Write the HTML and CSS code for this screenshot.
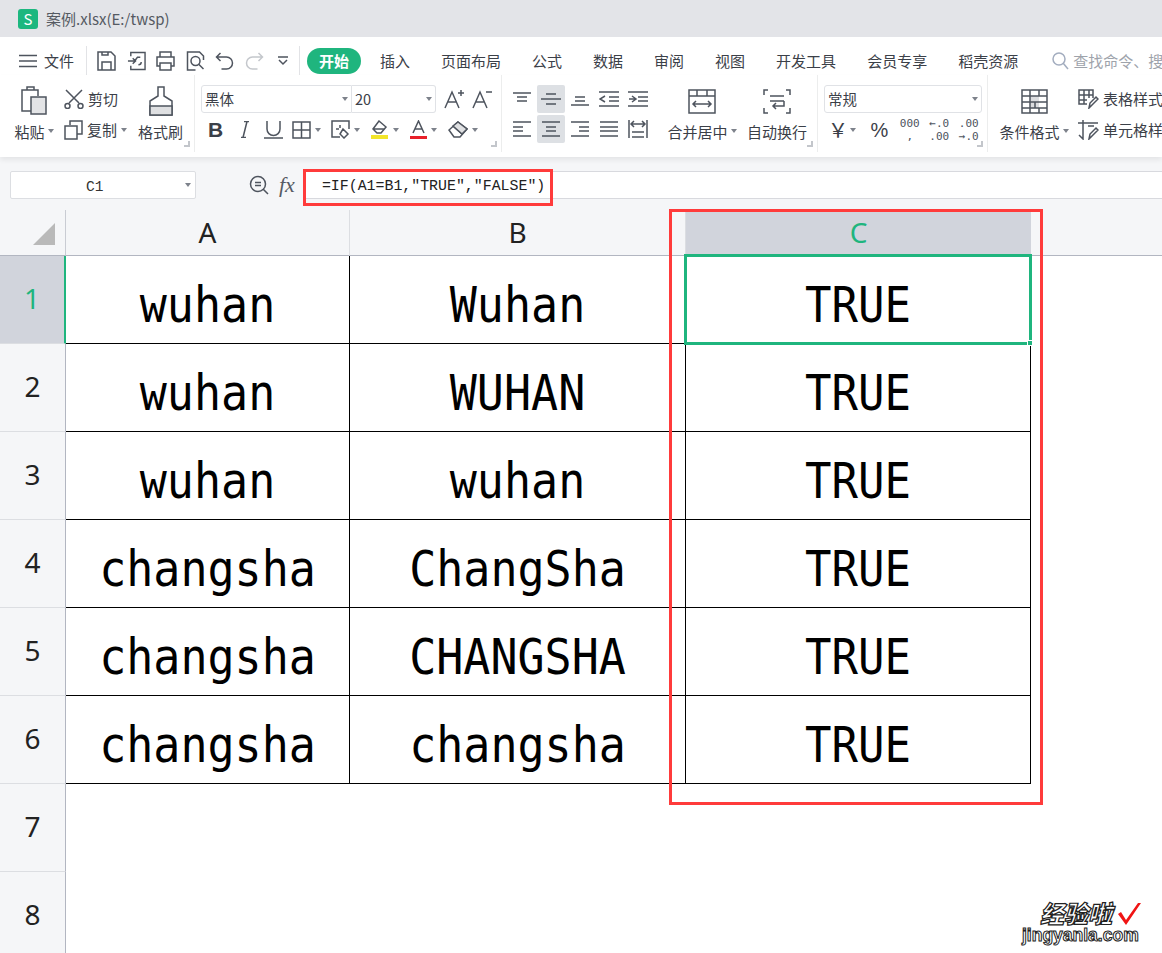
FILE: index.html
```html
<!DOCTYPE html>
<html lang="zh-CN">
<head>
    <meta charset="UTF-8">
    <title>案例.xlsx</title>
    <link rel="stylesheet" href="styles.css">
</head>
<body>
<div class="page">
    <div class="titlebar">
        <div class="logo">S</div>
        <span>案例.xlsx(E:/twsp)</span>
    </div>

    <div class="menubar">
        <svg class="ico burger" width="18" height="14" viewBox="0 0 18 14"><path d="M0 1.500h18M0 7h18M0 12.500h18"/></svg>
        <span class="file">文件</span>
        <i class="vsep first"></i>
        <svg class="ico qa" width="19" height="20" viewBox="0 0 19 20"><path d="M1 1h13l4 4v14H1zM5 19v-8h9v8M5 1v3h6V1"/></svg>
        <svg class="ico qa" width="19" height="20" viewBox="0 0 20 20"><path d="M4 5V1h15v18H4v-4M1 10h7l3-4h3M6 7l3 3-3 3M12 14a3 3 0 0 0 3-3"/></svg>
        <svg class="ico qa" width="19" height="20" viewBox="0 0 19 20"><path d="M4 6V1h11v5M4 15H1V6h17v9h-3M4 12h11v7H4z"/></svg>
        <svg class="ico qa" width="19" height="20" viewBox="0 0 18 20"><path d="M17 9V5l-4-4H1v18h8"/><circle cx="9" cy="10" r="4.500"/><path d="M12 13l5 5"/></svg>
        <svg class="ico qa" width="19" height="18" viewBox="0 0 18 18"><path d="M5 1L1 5l4 4M1 5h10a6 6 0 0 1 0 12H6"/></svg>
        <svg class="ico qa light" width="19" height="18" viewBox="0 0 18 18"><path d="M13 1l4 4-4 4M17 5H7a6 6 0 0 0 0 12h5"/></svg>
        <svg class="ico more" width="10" height="10" viewBox="0 0 10 10"><path d="M0 1h10M1 4l4 4 4-4"/></svg>
        <i class="vsep"></i>
        <span class="pill">开始</span>
        <nav class="tabs">
            <span>插入</span><span>页面布局</span><span>公式</span><span>数据</span><span>审阅</span><span>视图</span><span>开发工具</span><span>会员专享</span><span>稻壳资源</span>
        </nav>
        <div class="search">
            <svg class="ico" width="17" height="18" viewBox="0 0 17 18"><circle cx="7" cy="7" r="6"/><path d="M11 11l5 6"/></svg>
            <span>查找命令、搜</span>
        </div>
    </div>

    <div class="ribbon">
        <section class="group g-clip">
            <div class="big paste">
                <div class="big-icon">
                    <svg class="ico" width="28" height="30" viewBox="0 0 28 30"><path d="M12 25H2V4h16v6M7 4V1h7v3z"/><rect x="11" y="11" width="15" height="17" fill="#e3e4e6"/></svg>
                </div>
                <div class="label">粘贴<b class="caret"></b></div>
            </div>
            <div class="tools">
                <div class="row">
                    <svg class="ico" width="20" height="20" viewBox="0 0 20 20"><path d="M2 1l13 13M18 1L5 14"/><circle cx="3.500" cy="17" r="2.500"/><circle cx="16.500" cy="17" r="2.500"/></svg>
                    <span>剪切</span>
                </div>
                <div class="row">
                    <svg class="ico" width="19" height="20" viewBox="0 0 19 20"><path d="M6 5V1h12v13h-5"/><path d="M1 6h12v13H1z"/></svg>
                    <span>复制</span><b class="caret"></b>
                </div>
            </div>
            <div class="big brush">
                <div class="big-icon">
                    <svg class="ico" width="24" height="30" viewBox="0 0 24 30"><path d="M9 1h6v9l8 5v14H1V15l8-5z"/><path d="M1 20h22v9H1z" fill="#dfe0e2"/></svg>
                </div>
                <div class="label">格式刷</div>
            </div>
            <i class="launcher"></i>
        </section>

        <section class="group g-font">
            <div class="row">
                <div class="select font-name">黑体<b class="caret"></b></div>
                <div class="select font-size">20<b class="caret"></b></div>
                <svg class="ico grow" width="20" height="20" viewBox="0 0 20 20"><path d="M1 19L8 3l7 16M4 13h8M14 4h6M17 1v6"/></svg>
                <svg class="ico grow" width="20" height="20" viewBox="0 0 20 20"><path d="M1 19L8 3l7 16M4 13h8M14 3h6"/></svg>
            </div>
            <div class="row">
                <div class="t"><span class="bold-b">B</span></div>
                <div class="t"><svg class="ico" width="8" height="17" viewBox="0 0 8 17"><path d="M6 0.500L2 16.500M3 0.500h5M0 16.500h5"/></svg></div>
                <div class="t"><svg class="ico" width="19" height="18" viewBox="0 0 19 18"><path d="M3 0v8a6.500 6.500 0 0 0 13 0V0M0 17h19"/></svg></div>
                <div class="t-a w39"><svg class="ico" width="19" height="18" viewBox="0 0 19 18"><path d="M1 1h17v16H1zM9.500 1v16M1 9h17"/></svg><b class="caret"></b></div>
                <div class="t-a w39"><svg class="ico" width="19" height="19" viewBox="0 0 19 19"><path d="M9 17H1V1h17v8M9 5v3M5 9h3M12 9l5 5-4 4-4-4z"/></svg><b class="caret"></b></div>
                <div class="t-a w40"><svg class="ico" width="19" height="19" viewBox="0 0 19 19"><path d="M9 1l7 6-5 6H7L3 9zM3 9h12"/><rect x="1" y="15" width="17" height="4" fill="#f2e52a" stroke="none"/></svg><b class="caret"></b></div>
                <div class="t-a w38"><svg class="ico" width="17" height="20" viewBox="0 0 17 20"><path d="M3 13L8.500 1 14 13M5 9h7"/><rect y="16" width="17" height="3" fill="#e8202a" stroke="none"/></svg><b class="caret"></b></div>
                <div class="t-a w40"><svg class="ico" width="20" height="17" viewBox="0 0 20 17"><path d="M10 1l9 7-7 8H6L1 9zM5 5l9 8"/><path d="M10 1l9 7-5 5-9-8z" fill="#dfe0e2"/></svg><b class="caret"></b></div>
            </div>
            <i class="launcher"></i>
        </section>

        <section class="group g-align">
            <div class="align-grid">
                <div class="a"><svg class="ico" width="18" height="14" viewBox="0 0 18 14"><path d="M0 1h18M4 5h10M4 9h10"/></svg></div>
                <div class="a on"><svg class="ico" width="20" height="14" viewBox="0 0 20 14"><path d="M5 2h10M0 7h20M5 12h10"/></svg></div>
                <div class="a"><svg class="ico" width="18" height="14" viewBox="0 0 18 14"><path d="M4 5h10M0 13h18M4 9h10"/></svg></div>
                <div class="a"><svg class="ico" width="20" height="16" viewBox="0 0 20 16"><path d="M0 1h20M10 6h10M10 10h10M0 15h20M6 5L1 8l5 3"/></svg></div>
                <div class="a"><svg class="ico" width="20" height="16" viewBox="0 0 20 16"><path d="M0 1h20M10 6h10M10 10h10M0 15h20M1 8h6M4 5l4 3-4 3"/></svg></div>
                <div class="a"><svg class="ico" width="18" height="16" viewBox="0 0 18 16"><path d="M0 1h18M0 6h10M0 10h10M0 15h18"/></svg></div>
                <div class="a on"><svg class="ico" width="18" height="16" viewBox="0 0 18 16"><path d="M0 1h18M4 6h10M4 10h10M0 15h18"/></svg></div>
                <div class="a"><svg class="ico" width="18" height="16" viewBox="0 0 18 16"><path d="M0 1h18M8 6h10M8 10h10M0 15h18"/></svg></div>
                <div class="a"><svg class="ico" width="18" height="16" viewBox="0 0 18 16"><path d="M0 1h18M0 6h18M0 10h18M0 15h18"/></svg></div>
                <div class="a"><svg class="ico" width="20" height="18" viewBox="0 0 20 18"><path d="M1 0v18M19 0v18M4 12h12M4 17h12M4 4h12M6 1L3 4l3 3M14 1l3 3-3 3"/></svg></div>
            </div>
            <div class="big merge">
                <div class="big-icon">
                    <svg class="ico" width="28" height="25" viewBox="0 0 28 25"><path d="M1 1h26v23H1zM1 7h26M9 1v6M19 1v6M5 15h18M8 12l-3 3 3 3M20 12l3 3-3 3"/></svg>
                </div>
                <div class="label">合并居中<b class="caret"></b></div>
            </div>
            <div class="big wrap">
                <div class="big-icon">
                    <svg class="ico" width="28" height="25" viewBox="0 0 28 25"><path d="M5 1H1v5M23 1h4v5M5 24H1v-5M23 24h4v-5M7 7h14M7 12h14M21 12v5H10M13 14l-3 3 3 3"/></svg>
                </div>
                <div class="label">自动换行</div>
            </div>
            <i class="launcher"></i>
        </section>

        <section class="group g-num">
            <div class="row">
                <div class="select num-format">常规<b class="caret"></b></div>
            </div>
            <div class="row">
                <div class="n-yen"><span class="yen">￥</span><b class="caret"></b></div>
                <div class="n pct">%</div>
                <div class="n small">000<br>,</div>
                <div class="n small">←.0<br>.00</div>
                <div class="n small">.00<br>→.0</div>
            </div>
            <i class="launcher"></i>
        </section>

        <section class="group g-style">
            <div class="big cond">
                <div class="big-icon">
                    <svg class="ico" width="27" height="25" viewBox="0 0 27 25"><path d="M9 7h9v12H9z" fill="#dcdde0" stroke="none"/><path d="M1 1h25v23H1zM1 7h25M1 13h25M1 19h25M9 1v6M18 1v6M9 7v12M18 19v5M14 13v6M9 19v5"/></svg>
                </div>
                <div class="label">条件格式<b class="caret"></b></div>
            </div>
            <div class="tools style-tools">
                <div class="row">
                    <svg class="ico" width="21" height="20" viewBox="0 0 21 20"><path d="M9 15H1V1h14v8M1 6h14M1 11h8M6 1v14M11 1v8M11 19l1-5 6-6 2 2-6 6z"/></svg>
                    <span>表格样式</span>
                </div>
                <div class="row">
                    <svg class="ico" width="21" height="20" viewBox="0 0 21 20"><path d="M0 3h20M5 0v18M1 15l4 4 0-4M10 6h6M11 19l1-5 6-6 2 2-6 6z"/></svg>
                    <span>单元格样式</span>
                </div>
            </div>
        </section>
    </div>

    <div class="formulabar">
        <div class="namebox">C1<b class="caret"></b></div>
        <svg class="ico zoom" width="20" height="20" viewBox="0 0 20 20"><circle cx="9" cy="9" r="7.500"/><path d="M14 14l5 5M6 7.500h6M6 10.500h6"/></svg>
        <span class="fx">fx</span>
        <div class="formula">=IF(A1=B1,"TRUE","FALSE")</div>
    </div>

    <div class="sheet">
        <div class="corner"><i class="tri"></i></div>
        <div class="col-head">A</div>
        <div class="col-head">B</div>
        <div class="col-head cur">C</div>
        <div class="col-rest"></div>

        <div class="row-head cur">1</div>
        <div class="cell"><span>wuhan</span></div>
        <div class="cell"><span>Wuhan</span></div>
        <div class="cell result active"><span>TRUE</span><i class="handle"></i></div>
        <div></div>

        <div class="row-head">2</div>
        <div class="cell"><span>wuhan</span></div>
        <div class="cell"><span>WUHAN</span></div>
        <div class="cell result"><span>TRUE</span></div>
        <div></div>

        <div class="row-head">3</div>
        <div class="cell"><span>wuhan</span></div>
        <div class="cell"><span>wuhan</span></div>
        <div class="cell result"><span>TRUE</span></div>
        <div></div>

        <div class="row-head">4</div>
        <div class="cell"><span>changsha</span></div>
        <div class="cell"><span>ChangSha</span></div>
        <div class="cell result"><span>TRUE</span></div>
        <div></div>

        <div class="row-head">5</div>
        <div class="cell"><span>changsha</span></div>
        <div class="cell"><span>CHANGSHA</span></div>
        <div class="cell result"><span>TRUE</span></div>
        <div></div>

        <div class="row-head">6</div>
        <div class="cell"><span>changsha</span></div>
        <div class="cell"><span>changsha</span></div>
        <div class="cell result"><span>TRUE</span></div>
        <div></div>

        <div class="row-head">7</div>
        <div class="blank"></div>
        <div class="row-head">8</div>
        <div class="blank"></div>
    </div>

    <div class="redbox box-formula"></div>
    <div class="redbox box-col"></div>

    <div class="watermark">
        <div class="wm-cn">经验啦</div>
        <svg class="wm-check" width="25" height="24" viewBox="0 0 25 24"><path d="M1 12l3-2 5 8L21 1h3L9 23z" fill="#f01414"/></svg>
        <div class="wm-en">jingyanla.com</div>
    </div>
</div>
</body>
</html>
```

FILE: styles.css
```css
* {
    box-sizing: border-box;
}
body {
    margin: 0;
    background: #fff;
    font-family: "Noto Sans CJK SC", "Noto Sans", sans-serif;
    color: #3b4048;
    overflow: hidden;
}
.page {
    position: relative;
    width: 1162px;
    height: 953px;
    overflow: hidden;
}
.ico {
    fill: none;
    stroke: #4e545e;
    stroke-width: 1.5;
    flex: none;
    display: block;
}
.caret {
    display: inline-block;
    width: 0;
    height: 0;
    border-left: 3.5px solid transparent;
    border-right: 3.5px solid transparent;
    border-top: 4px solid #7d828b;
    flex: none;
}

/* title */
.titlebar {
    height: 37px;
    background: #e3e4e8;
    display: flex;
    align-items: center;
    padding-left: 18px;
    font-size: 15px;
    color: #555a62;
}
.logo {
    width: 20px;
    height: 20px;
    margin-right: 8px;
    border-radius: 3px;
    background: #1cb77f;
    color: #fff;
    font-size: 15px;
    line-height: 20px;
    text-align: center;
}

/* menu */
.menubar {
    height: 38px;
    display: flex;
    align-items: center;
    padding: 9px 0 0 19px;
    font-size: 15px;
    line-height: 20px;
    white-space: nowrap;
}
.file {
    margin-left: 7px;
    flex: none;
}
.vsep {
    width: 1px;
    height: 30px;
    flex: none;
    background: #e2e3e6;
    margin: 0 7px 0 11px;
}
.vsep.first {
    margin-left: 12px;
    margin-right: 10px;
}
.qa {
    margin-right: 10.5px;
}
.light {
    stroke: #c4c7cc;
}
.more {
    margin-left: 4px;
}
.pill {
    flex: none;
    width: 54px;
    height: 26px;
    border-radius: 13px;
    background: #1fb57e;
    color: #fff;
    font-weight: 700;
    text-align: center;
    line-height: 26px;
}
.tabs {
    display: flex;
    flex: none;
    gap: 31px;
    margin-left: 19px;
}
.search {
    display: flex;
    flex: none;
    align-items: center;
    gap: 4px;
    margin-left: 34px;
    color: #9ea3ab;
}
.search .ico {
    stroke: #a3adbf;
}

/* ribbon */
.ribbon {
    position: relative;
    z-index: 1;
    height: 82px;
    display: flex;
    padding-bottom: 5px;
    font-size: 15px;
    white-space: nowrap;
    box-shadow: 0 3px 5px rgba(0, 0, 0, 0.07);
    background: #fff;
}
.group {
    position: relative;
    flex: none;
    height: 77px;
    padding-top: 8px;
    border-right: 1px solid #eceded;
}
.g-clip,
.g-align,
.g-style {
    display: flex;
}
.launcher {
    position: absolute;
    right: 4px;
    bottom: 5px;
    width: 6px;
    height: 6px;
    border-right: 2px solid #c3c6cb;
    border-bottom: 2px solid #c3c6cb;
}
.big {
    display: flex;
    flex-direction: column;
    align-items: center;
}
.big-icon {
    height: 36px;
    display: flex;
    align-items: center;
    justify-content: center;
}
.label {
    display: flex;
    align-items: center;
    gap: 3px;
    margin-top: 3px;
    height: 18px;
}
.row {
    height: 31px;
    display: flex;
    align-items: center;
}
.tools .row {
    gap: 4px;
}

.g-clip {
    width: 195px;
}
.paste {
    width: 40px;
    margin-left: 14px;
}
.tools {
    width: 68px;
    margin-left: 10px;
}
.brush {
    width: 45px;
    margin-left: 6px;
}

.g-font {
    width: 307px;
    padding-left: 6px;
}
.select {
    height: 28px;
    border: 1px solid #e0e2e6;
    display: flex;
    align-items: center;
    justify-content: space-between;
    padding: 0 3px 0 3px;
    font-size: 14.500px;
}
.font-name {
    width: 151px;
    border-radius: 3px 0 0 3px;
}
.font-size {
    width: 84px;
    border-left: 0;
    border-radius: 0 3px 3px 0;
}
.grow {
    margin-left: 8px;
}
.t {
    width: 29px;
    display: flex;
    justify-content: center;
}
.bold-b {
    font-family: "Liberation Sans", sans-serif;
    font-weight: 700;
    font-size: 21px;
    line-height: 20px;
}
.t-a {
    display: flex;
    align-items: center;
    gap: 4px;
    padding-left: 4px;
}
.w38 { width: 38px; }
.w39 { width: 39px; }
.w40 { width: 40px; }

.g-align {
    width: 316px;
    padding-left: 6px;
}
.align-grid {
    display: grid;
    grid-template-columns: repeat(5, 29px);
    grid-template-rows: 28px 28px;
    row-gap: 2px;
    margin-top: 2px;
}
.a {
    width: 28px;
    display: flex;
    align-items: center;
    justify-content: center;
    border-radius: 2px;
}
.a.on {
    background: #dde0e4;
}
.merge {
    width: 72px;
    margin-left: 13px;
}
.wrap {
    width: 60px;
    margin-left: 9px;
}

.g-num {
    width: 170px;
    padding-left: 6px;
}
.num-format {
    width: 158px;
    border-radius: 3px;
}
.n-yen {
    display: flex;
    align-items: center;
    gap: 2px;
    width: 41px;
    padding-left: 4px;
}
.yen {
    font-size: 20px;
    line-height: 22px;
}
.n {
    width: 29px;
    text-align: center;
    font-family: "Liberation Sans", sans-serif;
    font-size: 20px;
    line-height: 20px;
}
.n.pct {
    width: 29px;
    margin-right: 1px;
}
.n.small {
    width: 29.500px;
    font-family: "DejaVu Sans Mono", monospace;
    font-size: 11px;
    line-height: 13px;
    color: #4e545e;
}

.g-style {
    width: 174px;
    border-right: 0;
}
.cond {
    width: 70px;
    margin-left: 11px;
}
.style-tools {
    margin-left: 9px;
}

/* formula bar */
.formulabar {
    height: 53px;
    background: #f5f6f8;
    display: flex;
    align-items: center;
    padding: 3px 0 0 10px;
}
.namebox {
    position: relative;
    flex: none;
    width: 186px;
    height: 28px;
    background: #fff;
    border: 1px solid #dcdee2;
    border-radius: 2px;
    display: flex;
    align-items: center;
    justify-content: space-between;
    padding: 3px 4px 0 75px;
    font-family: "Liberation Mono", monospace;
    font-size: 14.500px;
    color: #333;
}
.namebox .caret {
    margin-top: -3px;
}
.zoom {
    margin-left: 53px;
}
.fx {
    margin-left: 10px;
    font-family: "Liberation Serif", serif;
    font-style: italic;
    font-size: 22px;
    color: #555b64;
}
.formula {
    flex: 1;
    height: 28px;
    margin-left: 9px;
    padding-left: 18px;
    background: #fff;
    border-top: 1px solid #d8d9de;
    border-bottom: 1px solid #d8d9de;
    font-family: "Liberation Mono", monospace;
    font-size: 14.900px;
    line-height: 29px;
    color: #222;
}

/* sheet */
.sheet {
    display: grid;
    grid-template-columns: 66px 284px 336px 345px 1fr;
    grid-template-rows: 46px repeat(8, 88px);
    font-family: "Noto Sans", sans-serif;
}
.corner,
.col-head,
.col-rest {
    background: #f5f6f8;
    border-bottom: 1px solid #b2b6c1;
}
.corner {
    position: relative;
    border-right: 1px solid #c9ccd3;
}
.tri {
    position: absolute;
    left: 33px;
    top: 13px;
    border-left: 22px solid transparent;
    border-bottom: 22px solid #b9b9b9;
}
.col-head {
    font-size: 28px;
    line-height: 44px;
    text-align: center;
    color: #222;
    border-right: 1px solid #dcdee2;
}
.col-head.cur,
.row-head.cur {
    background: #d1d4dc;
    color: #1fb57e;
}
.col-head.cur {
    border-top: 2px solid #f5f6f8;
    border-right: 0;
    line-height: 41px;
}
.row-head {
    background: #f5f6f8;
    border-right: 1px solid #b2b6c1;
    border-bottom: 1px solid #dcdee2;
    font-size: 28px;
    color: #222;
    display: flex;
    align-items: center;
    justify-content: center;
    padding-bottom: 4px;
}
.row-head.cur {
    border-right: 2px solid #1fb57e;
}
.blank {
    grid-column: 2 / -1;
}
.cell {
    position: relative;
    border-right: 1px solid #000;
    border-bottom: 1px solid #000;
    display: flex;
    align-items: center;
    justify-content: center;
    padding-top: 10px;
}
.cell span {
    display: block;
    font-family: "DejaVu Sans Mono", monospace;
    font-size: 45px;
    line-height: 52px;
    color: #000;
    transform: scaleY(1.12);
}
.result span {
    font-size: 44px;
    transform: scaleY(1.14);
}
.active {
    border: 0;
    outline: 3px solid #1fb57e;
    outline-offset: -2px;
    margin: -1px 0 0 -1px;
    z-index: 1;
}
.handle {
    position: absolute;
    right: -2px;
    bottom: -2px;
    width: 6px;
    height: 6px;
    background: #1fb57e;
    border: 1px solid #fff;
}

/* red marks drawn over the screen */
.redbox {
    position: absolute;
    z-index: 2;
    border: 3px solid #ff3b3b;
}
.box-formula {
    left: 303px;
    top: 169px;
    width: 250px;
    height: 37px;
}
.box-col {
    left: 669px;
    top: 209px;
    width: 374px;
    height: 596px;
}

/* watermark */
.watermark {
    position: absolute;
    z-index: 2;
    left: 1022px;
    top: 900px;
    width: 130px;
}
.wm-cn {
    margin-left: 18px;
    font-size: 24px;
    line-height: 26px;
    font-weight: 900;
    font-style: italic;
    color: #fff;
    -webkit-text-stroke: 1.2px #222;
}
.wm-check {
    position: absolute;
    left: 95px;
    top: 2px;
}
.wm-en {
    font-family: "Liberation Sans", sans-serif;
    font-size: 17.500px;
    line-height: 19px;
    font-weight: 700;
    color: #fff;
    -webkit-text-stroke: 1px #222;
}
```
